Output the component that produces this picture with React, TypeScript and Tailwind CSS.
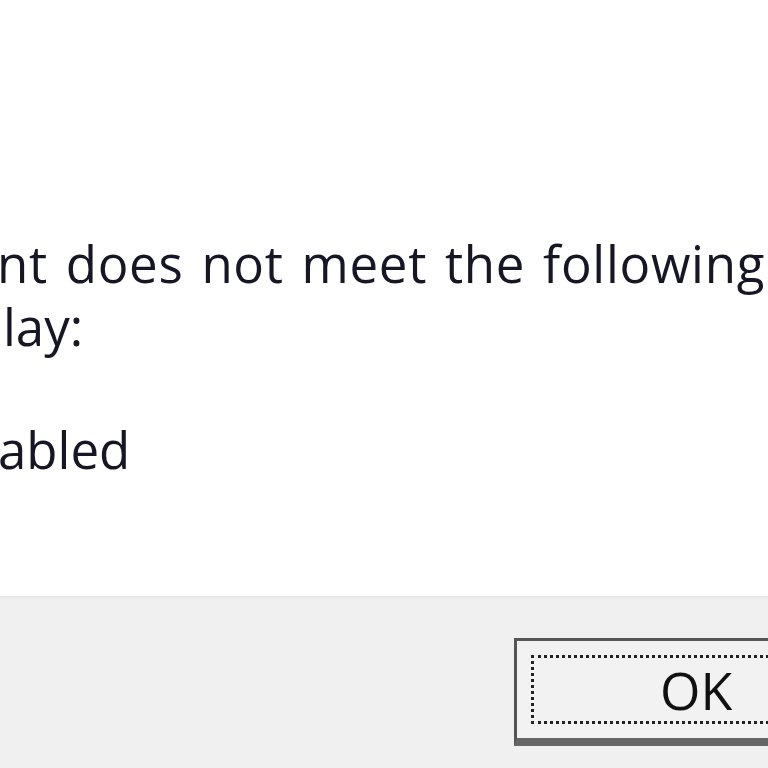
import React from 'react';

const App = () => {
  return (
    <div className="w-[768px] h-[768px] overflow-hidden flex flex-col bg-white font-['Open_Sans',sans-serif] text-[#161624]">
      <div className="h-[596px] pt-[232px] whitespace-nowrap text-[51px] font-medium leading-[63px] [word-spacing:4px]">
        <p className="ml-[-3px] tracking-[0.7px]">nt does not meet the following requirements to</p>
        <p className="ml-[3px]">lay:</p>
        <p className="mt-[60px] ml-[-2px]">abled</p>
      </div>
      <div className="flex-1 bg-[#f0f0f0] border-t-2 border-[#e8e8e8] pt-[40px] pl-[514px]">
        <button className="w-[320px] h-[108px] shrink-0 border-[3px] border-[#555555] border-b-[8px] border-b-[#666666] bg-[#f2f2f2] p-[14px] text-left">
          <div className="h-full border-[3px] border-dotted border-[#222222] flex items-center pl-[126px] text-[52px] leading-none text-[#111111]">
            OK
          </div>
        </button>
      </div>
    </div>
  );
};

export default App;
